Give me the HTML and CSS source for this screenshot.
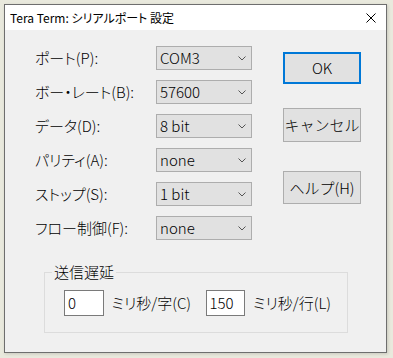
FILE: index.html
```html
<!DOCTYPE html>
<html lang="ja">

<head>
    <meta charset="UTF-8">
    <title>Tera Term: シリアルポート 設定</title>
    <link rel="stylesheet" href="styles.css">
</head>

<body>
    <div class="window">
        <div class="titlebar">
            <span class="title">Tera Term: シリアルポート 設定</span>
            <svg class="close" width="10" height="10" viewBox="0 0 10 10">
                <path d="M0.5 0.5 L9.5 9.5 M9.5 0.5 L0.5 9.5" stroke="#000" stroke-width="1" fill="none" />
            </svg>
        </div>
        <div class="content">
            <div class="left">
                <div class="rows">
                    <label>ポート(P):</label>
                    <div class="combo"><span>COM3</span><svg width="8" height="5" viewBox="0 0 8 5"><path d="M0.5 0.5 L4 4 L7.5 0.5" stroke="#555" fill="none" /></svg></div>
                    <label>ボー・レート(B):</label>
                    <div class="combo"><span>57600</span><svg width="8" height="5" viewBox="0 0 8 5"><path d="M0.5 0.5 L4 4 L7.5 0.5" stroke="#555" fill="none" /></svg></div>
                    <label>データ(D):</label>
                    <div class="combo"><span>8 bit</span><svg width="8" height="5" viewBox="0 0 8 5"><path d="M0.5 0.5 L4 4 L7.5 0.5" stroke="#555" fill="none" /></svg></div>
                    <label>パリティ(A):</label>
                    <div class="combo"><span>none</span><svg width="8" height="5" viewBox="0 0 8 5"><path d="M0.5 0.5 L4 4 L7.5 0.5" stroke="#555" fill="none" /></svg></div>
                    <label>ストップ(S):</label>
                    <div class="combo"><span>1 bit</span><svg width="8" height="5" viewBox="0 0 8 5"><path d="M0.5 0.5 L4 4 L7.5 0.5" stroke="#555" fill="none" /></svg></div>
                    <label>フロー制御(F):</label>
                    <div class="combo"><span>none</span><svg width="8" height="5" viewBox="0 0 8 5"><path d="M0.5 0.5 L4 4 L7.5 0.5" stroke="#555" fill="none" /></svg></div>
                </div>
                <fieldset class="group">
                    <legend>送信遅延</legend>
                    <div class="delay">
                        <div class="field">0</div>
                        <span class="unit">ミリ秒/字(C)</span>
                        <div class="field">150</div>
                        <span class="unit">ミリ秒/行(L)</span>
                    </div>
                </fieldset>
            </div>
            <div class="buttons">
                <button class="btn btn-ok">OK</button>
                <button class="btn btn-cancel">キャンセル</button>
                <button class="btn btn-help">ヘルプ(H)</button>
            </div>
        </div>
    </div>
</body>

</html>
```

FILE: styles.css
```css
* {
    margin: 0;
    padding: 0;
    box-sizing: border-box;
}

body {
    background: #e9e9dd;
    width: 393px;
    height: 358px;
    overflow: hidden;
    font-family: "Noto Sans CJK JP", "Noto Sans", sans-serif;
    font-weight: 300;
    color: #000;
}

.window {
    margin: 4px 0 0 4px;
    width: 383px;
    height: 349px;
    background: #f0f0f0;
    border: 1px solid #6e6e6e;
    box-shadow: 1px 1px 3px rgba(0, 0, 0, 0.15);
}

/* title bar */
.titlebar {
    height: 25px;
    background: #fff;
    display: flex;
    align-items: center;
    justify-content: space-between;
    padding: 0 10px 0 5px;
}

.title {
    font-size: 12px;
    font-weight: 400;
    font-feature-settings: "palt";
    line-height: 14px;
    margin-top: 1px;
}

.close {
    display: block;
}

/* body */
.content {
    display: flex;
    padding: 16px 0 0 30px;
}

.left {
    width: 248px;
}

.rows {
    display: grid;
    grid-template-columns: 121px 96px;
    grid-auto-rows: 24px;
    row-gap: 10px;
    align-items: center;
}

.rows label {
    font-size: 15px;
    line-height: 18px;
    white-space: nowrap;
    font-feature-settings: "palt";
}

.combo {
    height: 24px;
    background: #e1e1e1;
    border: 1px solid #adadad;
    display: flex;
    align-items: center;
    justify-content: space-between;
    padding: 0 5px 0 3px;
    font-size: 15px;
    line-height: 18px;
}

.combo svg {
    display: block;
}

/* send delay group */
.group {
    margin: 23px 0 0 9px;
    width: 304px;
    border: 1px solid #dcdcdc;
    padding: 9px 0 16px 19px;
    min-inline-size: 0;
}

.group legend {
    font-size: 15px;
    line-height: 18px;
    padding: 0 2px;
    margin-left: -12px;
}

.delay {
    display: flex;
    align-items: center;
    font-size: 15px;
    line-height: 18px;
}

.field {
    width: 40px;
    height: 26px;
    background: #fff;
    border: 1px solid #7a7a7a;
    padding: 3px 0 0 3px;
}

.unit {
    width: 103px;
    padding-left: 8px;
    white-space: nowrap;
    font-feature-settings: "palt";
}

/* buttons */
.buttons {
    display: flex;
    flex-direction: column;
}

.btn {
    width: 78px;
    height: 33px;
    background: #e1e1e1;
    border: 1px solid #adadad;
    font-family: inherit;
    font-weight: 300;
    font-size: 15px;
    line-height: 18px;
    color: #000;
    white-space: nowrap;
    padding: 0;
}

.btn-ok {
    margin-top: 6px;
    height: 32px;
    border: 2px solid #0078d7;
}

.btn-cancel {
    margin-top: 24px;
    height: 34px;
}

.btn-help {
    margin-top: 29px;
}
```
